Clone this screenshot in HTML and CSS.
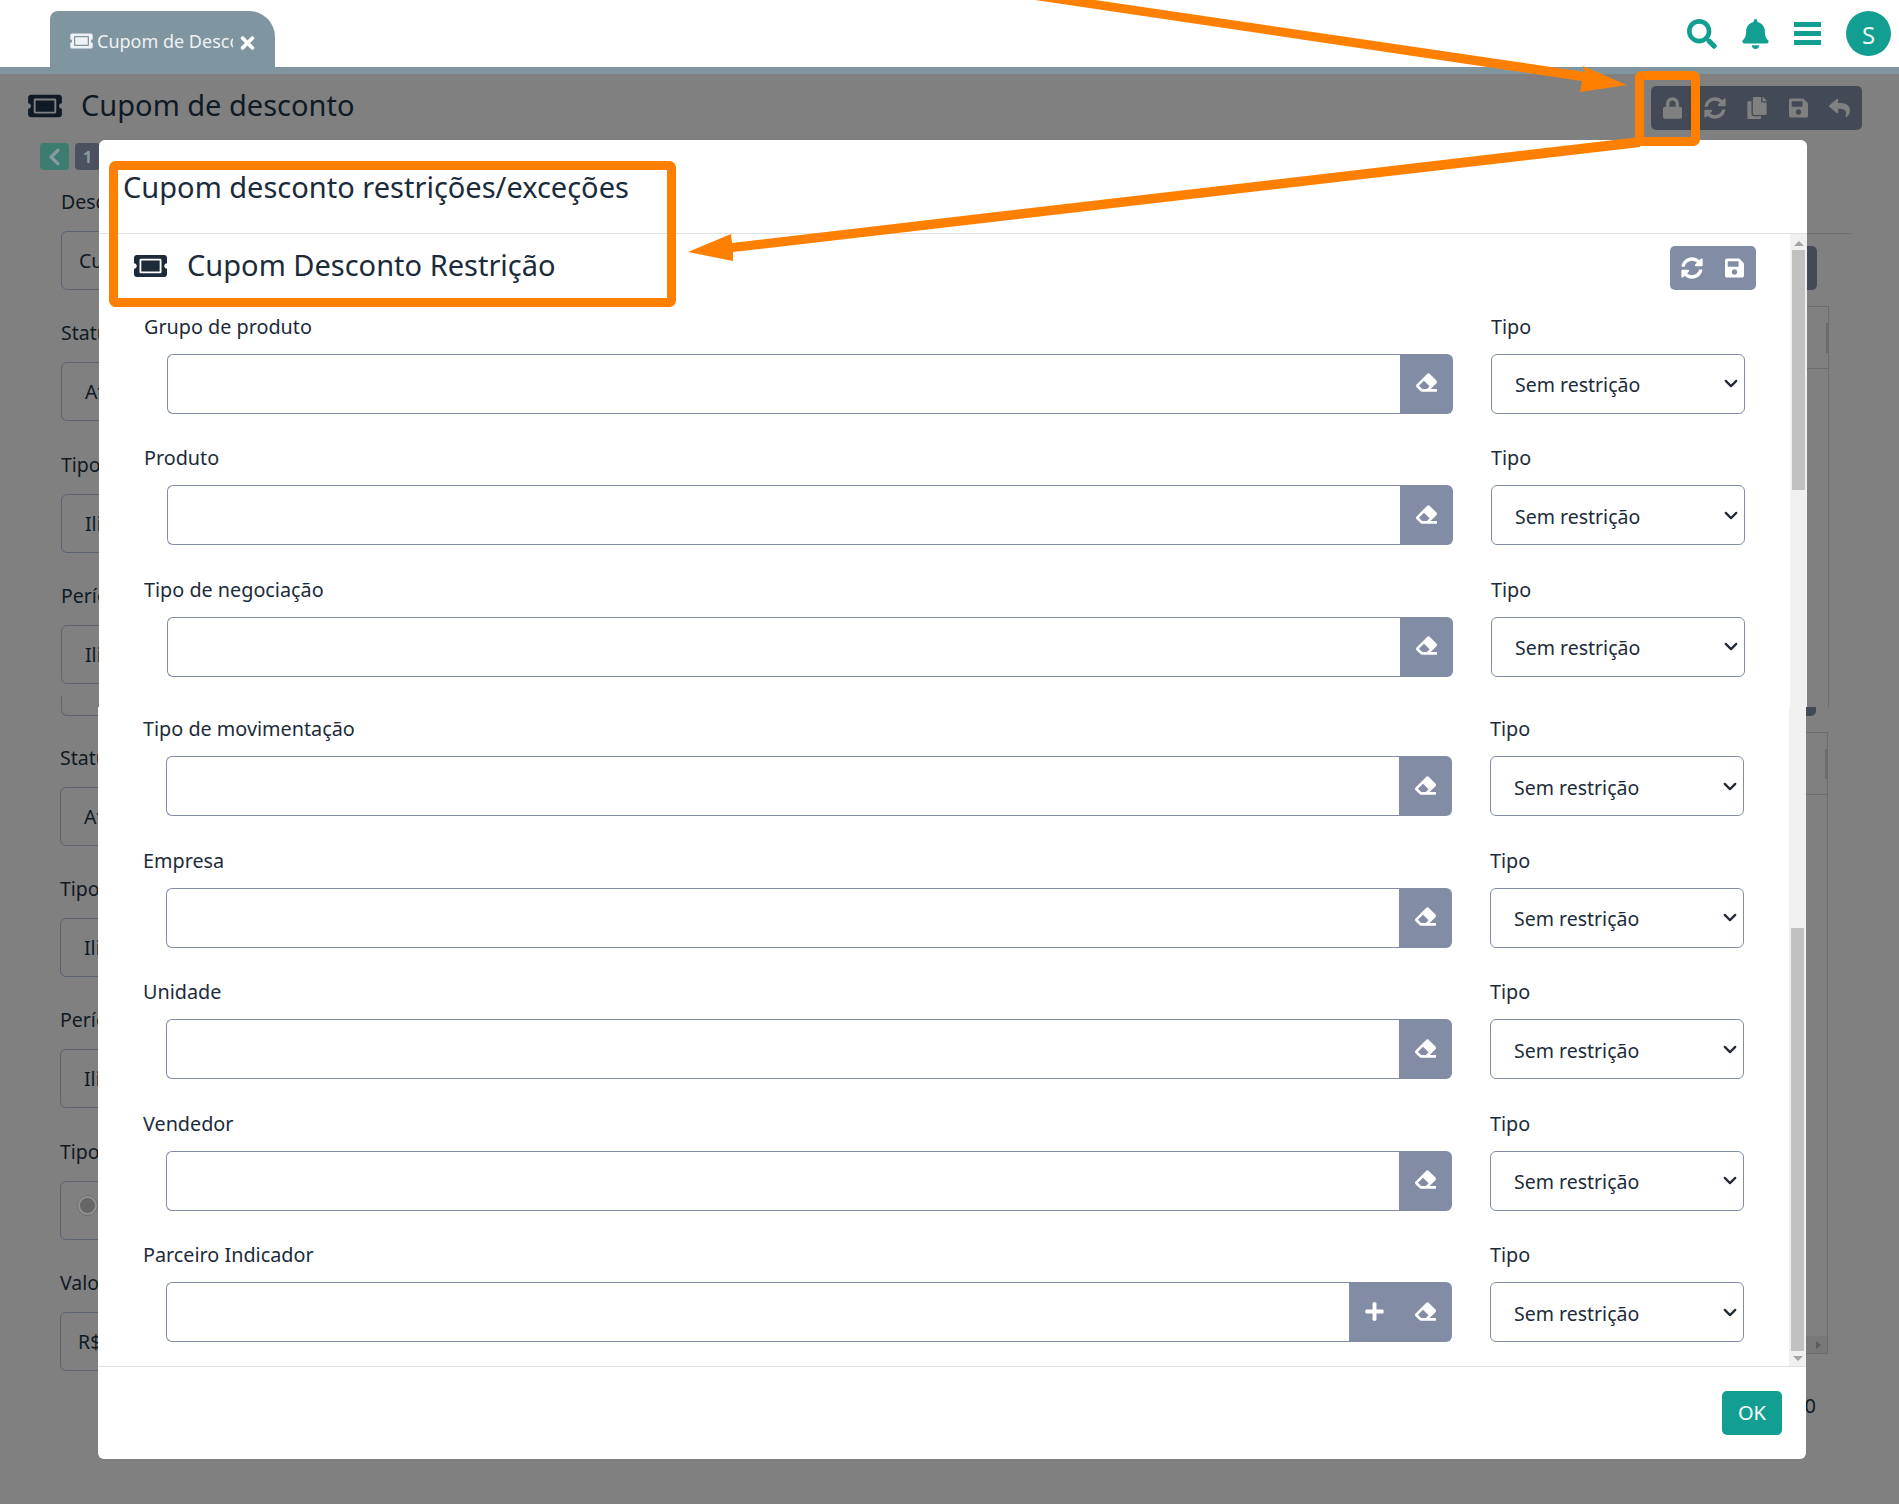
FILE: index.html
```html
<!DOCTYPE html>
<html lang="pt-BR">
<head>
  <meta charset="UTF-8">
  <title>Cupom de desconto</title>
  <link rel="stylesheet" href="styles.css">
</head>
<body>
  <svg class="sprite">
    <symbol id="i-ticket" viewBox="0 0 576 512"><path d="M128 160h320v192H128V160zm400 96c0 26.51 21.49 48 48 48v96c0 26.51-21.49 48-48 48H48c-26.51 0-48-21.49-48-48v-96c26.51 0 48-21.49 48-48s-21.49-48-48-48v-96c0-26.51 21.49-48 48-48h480c26.51 0 48 21.49 48 48v96c-26.51 0-48 21.49-48 48zm-48-104c0-13.255-10.745-24-24-24H120c-13.255 0-24 10.745-24 24v208c0 13.255 10.745 24 24 24h336c13.255 0 24-10.745 24-24V152z"/></symbol>
    <symbol id="i-search" viewBox="0 0 512 512"><path d="M505 442.7L405.3 343c-4.5-4.5-10.6-7-17-7H372c27.6-35.3 44-79.7 44-128C416 93.1 322.9 0 208 0S0 93.1 0 208s93.1 208 208 208c48.3 0 92.7-16.4 128-44v16.3c0 6.4 2.5 12.5 7 17l99.7 99.7c9.4 9.4 24.6 9.4 33.9 0l28.3-28.3c9.4-9.4 9.4-24.6.1-34zM208 336c-70.7 0-128-57.2-128-128 0-70.7 57.2-128 128-128 70.7 0 128 57.2 128 128 0 70.7-57.2 128-128 128z"/></symbol>
    <symbol id="i-bell" viewBox="0 0 448 512"><path d="M224 512c35.32 0 63.97-28.65 63.97-64H160.03c0 35.35 28.65 64 63.97 64zm215.39-149.71c-19.32-20.76-55.47-51.99-55.47-154.29 0-77.7-54.48-139.9-127.94-155.16V32c0-17.67-14.32-32-31.98-32s-31.98 14.33-31.98 32v20.84C118.56 68.1 64.08 130.3 64.08 208c0 102.3-36.15 133.53-55.47 154.29-6 6.45-8.66 14.16-8.61 21.71.11 16.4 12.98 32 32.1 32h383.8c19.12 0 32-15.6 32.1-32 .05-7.55-2.61-15.27-8.61-21.71z"/></symbol>
    <symbol id="i-lock" viewBox="0 0 448 512"><path d="M400 224h-24v-72C376 68.2 307.8 0 224 0S72 68.2 72 152v72H48c-26.5 0-48 21.5-48 48v192c0 26.5 21.5 48 48 48h352c26.5 0 48-21.5 48-48V272c0-26.5-21.5-48-48-48zm-104 0H152v-72c0-39.7 32.3-72 72-72s72 32.3 72 72v72z"/></symbol>
    <symbol id="i-sync" viewBox="0 0 512 512"><path d="M370.72 133.28C339.458 104.008 298.888 87.962 255.848 88c-77.458.068-144.328 53.178-162.791 126.85-1.344 5.363-6.122 9.15-11.651 9.15H24.103c-7.498 0-13.194-6.807-11.807-14.176C33.933 94.924 134.813 8 256 8c66.448 0 126.791 26.136 171.315 68.685L463.03 40.97C478.149 25.851 504 36.559 504 57.941V192c0 13.255-10.745 24-24 24H345.941c-21.382 0-32.09-25.851-16.971-40.971l41.75-41.749zM32 296h134.059c21.382 0 32.09 25.851 16.971 40.971l-41.75 41.75c31.262 29.273 71.835 45.319 114.876 45.28 77.418-.07 144.315-53.144 162.787-126.849 1.344-5.363 6.122-9.15 11.651-9.15h57.304c7.498 0 13.194 6.807 11.807 14.176C478.067 417.076 377.187 504 256 504c-66.448 0-126.791-26.136-171.315-68.685L48.97 471.03C33.851 486.149 8 475.441 8 454.059V320c0-13.255 10.745-24 24-24z"/></symbol>
    <symbol id="i-copy" viewBox="0 0 448 512"><path d="M320 448v40c0 13.255-10.745 24-24 24H24c-13.255 0-24-10.745-24-24V120c0-13.255 10.745-24 24-24h72v296c0 30.879 25.121 56 56 56h168zm0-344V0H152c-13.255 0-24 10.745-24 24v368c0 13.255 10.745 24 24 24h272c13.255 0 24-10.745 24-24V128H344c-13.2 0-24-10.8-24-24zm120.971-31.029L375.029 7.029A24 24 0 0 0 358.059 0H352v96h96v-6.059a24 24 0 0 0-7.029-16.97z"/></symbol>
    <symbol id="i-save" viewBox="0 0 448 512"><path d="M433.941 129.941l-83.882-83.882A48 48 0 0 0 316.118 32H48C21.49 32 0 53.49 0 80v352c0 26.51 21.49 48 48 48h352c26.51 0 48-21.49 48-48V163.882a48 48 0 0 0-14.059-33.941zM224 416c-35.346 0-64-28.654-64-64 0-35.346 28.654-64 64-64s64 28.654 64 64c0 35.346-28.654 64-64 64zm96-304.52V212c0 6.627-5.373 12-12 12H76c-6.627 0-12-5.373-12-12V108c0-6.627 5.373-12 12-12h228.52c3.183 0 6.235 1.264 8.485 3.515l3.48 3.48A11.996 11.996 0 0 1 320 111.48z"/></symbol>
    <symbol id="i-reply" viewBox="0 0 512 512"><path d="M8.309 189.836L184.313 37.851C199.719 24.546 224 35.347 224 56.015v80.053c160.629 1.839 288 34.032 288 186.258 0 61.441-39.581 122.309-83.333 154.132-13.653 9.931-33.111-2.533-28.077-18.631 45.344-145.012-21.507-183.51-176.59-185.742V360c0 20.7-24.3 31.453-39.687 18.164l-176.004-152c-11.071-9.562-11.086-26.753 0-36.328z"/></symbol>
    <symbol id="i-eraser" viewBox="0 0 512 512"><path d="M497.941 273.941c18.745-18.745 18.745-49.137 0-67.882l-160-160c-18.745-18.745-49.137-18.746-67.882 0l-256 256c-18.745 18.745-18.745 49.137 0 67.882l96 96A48.004 48.004 0 0 0 144 480h356c6.627 0 12-5.373 12-12v-40c0-6.627-5.373-12-12-12H355.883l142.058-142.059zm-302.627-62.627l137.373 137.373L265.373 416H150.628l-80-80 124.686-124.686z"/></symbol>
    <symbol id="i-plus" viewBox="0 0 448 512"><path d="M416 208H272V64c0-17.67-14.33-32-32-32h-32c-17.67 0-32 14.33-32 32v144H32c-17.67 0-32 14.33-32 32v32c0 17.67 14.33 32 32 32h144v144c0 17.67 14.33 32 32 32h32c17.67 0 32-14.33 32-32V304h144c17.67 0 32-14.33 32-32v-32c0-17.67-14.33-32-32-32z"/></symbol>
    <symbol id="i-times" viewBox="0 0 352 512"><path d="M242.72 256l100.07-100.07c12.28-12.28 12.28-32.19 0-44.48l-22.24-22.24c-12.28-12.28-32.19-12.28-44.48 0L176 189.28 75.93 89.21c-12.28-12.28-32.19-12.28-44.48 0L9.21 111.45c-12.28 12.28-12.28 32.19 0 44.48L109.28 256 9.21 356.07c-12.28 12.28-12.28 32.19 0 44.48l22.24 22.24c12.28 12.28 32.2 12.28 44.48 0L176 322.72l100.07 100.07c12.28 12.28 32.2 12.28 44.48 0l22.24-22.24c12.28-12.28 12.28-32.19 0-44.48L242.72 256z"/></symbol>
    <symbol id="i-left" viewBox="0 0 320 512"><path d="M34.52 239.03L228.87 44.69c9.37-9.37 24.57-9.37 33.94 0l22.67 22.67c9.36 9.36 9.37 24.52.04 33.9L131.49 256l154.02 154.75c9.34 9.38 9.32 24.54-.04 33.9l-22.67 22.67c-9.37 9.37-24.57 9.37-33.94 0L34.52 272.97c-9.37-9.37-9.37-24.57 0-33.94z"/></symbol>
  </svg>

  <header class="topbar">
    <div class="tab">
      <svg class="tab-icon"><use href="#i-ticket"/></svg>
      <span class="tab-text">Cupom de Desconto</span>
      <svg class="tab-close"><use href="#i-times"/></svg>
    </div>
    <nav class="topbar-icons">
      <svg class="top-search"><use href="#i-search"/></svg>
      <svg class="top-bell"><use href="#i-bell"/></svg>
      <div class="top-bars"><span></span><span></span><span></span></div>
      <div class="avatar">S</div>
    </nav>
  </header>
  <div class="band"></div>

  <main class="page">
    <div class="page-head">
      <svg class="page-icon"><use href="#i-ticket"/></svg>
      <h1 class="page-title">Cupom de desconto</h1>
      <div class="page-tools">
        <svg class="tool-lock"><use href="#i-lock"/></svg>
        <svg class="tool-sync"><use href="#i-sync"/></svg>
        <svg class="tool-copy"><use href="#i-copy"/></svg>
        <svg class="tool-save"><use href="#i-save"/></svg>
        <svg class="tool-reply"><use href="#i-reply"/></svg>
      </div>
    </div>
    <div class="page-columns">
      <div class="page-left">
        <div class="pager">
          <span class="pager-back"><svg><use href="#i-left"/></svg></span>
          <span class="pager-num">1</span>
        </div>
        <div class="bg-group">
          <div class="bg-field"><label>Descrição</label><div class="bg-box">Cupom</div></div>
          <div class="bg-field"><label>Status</label><div class="bg-box wide">Ativo</div></div>
          <div class="bg-field"><label>Tipo</label><div class="bg-box wide">Ilimitado</div></div>
          <div class="bg-field"><label>Período</label><div class="bg-box wide">Ilimitado</div></div>
          <div class="bg-stub"></div>
        </div>
        <div class="bg-group lower">
          <div class="bg-field"><label>Status</label><div class="bg-box wide">Ativo</div></div>
          <div class="bg-field"><label>Tipo</label><div class="bg-box wide">Ilimitado</div></div>
          <div class="bg-field"><label>Período</label><div class="bg-box wide">Ilimitado</div></div>
          <div class="bg-field"><label>Tipo</label><div class="bg-box radio-box"><span class="bg-radio"></span></div></div>
          <div class="bg-field"><label>Valor</label><div class="bg-box">R$ 0,00</div></div>
        </div>
      </div>
      <div class="page-right">
        <div class="bg-rule"></div>
        <div class="bg-button"></div>
        <div class="bg-table top-table"><div class="bg-table-row"><span class="bg-table-bar"></span></div></div>
        <div class="bg-button-end"></div>
        <div class="bg-table bottom-table">
          <div class="bg-table-row"><span class="bg-table-bar"></span></div>
          <div class="bg-table-scroll"><span></span></div>
        </div>
        <div class="bg-total">0</div>
      </div>
    </div>
  </main>

  <section class="modal">
    <div class="modal-upper">
      <div class="modal-header"><h2>Cupom desconto restrições/exceções</h2></div>
      <div class="modal-scroll upper-scroll">
        <div class="modal-content">
          <div class="section-head">
            <svg class="section-icon"><use href="#i-ticket"/></svg>
            <h3>Cupom Desconto Restrição</h3>
            <div class="section-tools">
              <svg class="tool-sync"><use href="#i-sync"/></svg>
              <svg class="tool-save"><use href="#i-save"/></svg>
            </div>
          </div>
          <div class="row">
            <div class="field"><label>Grupo de produto</label><div class="lookup"><input type="text"><button class="lookup-btn"><svg><use href="#i-eraser"/></svg></button></div></div>
            <div class="field"><label>Tipo</label><select><option>Sem restrição</option></select></div>
          </div>
          <div class="row">
            <div class="field"><label>Produto</label><div class="lookup"><input type="text"><button class="lookup-btn"><svg><use href="#i-eraser"/></svg></button></div></div>
            <div class="field"><label>Tipo</label><select><option>Sem restrição</option></select></div>
          </div>
          <div class="row">
            <div class="field"><label>Tipo de negociação</label><div class="lookup"><input type="text"><button class="lookup-btn"><svg><use href="#i-eraser"/></svg></button></div></div>
            <div class="field"><label>Tipo</label><select><option>Sem restrição</option></select></div>
          </div>
        </div>
        <div class="scrollbar">
          <span class="arrow-up"></span>
          <span class="thumb"></span>
        </div>
      </div>
    </div>

    <div class="modal-lower">
      <div class="modal-scroll lower-scroll">
        <div class="modal-content">
          <div class="row">
            <div class="field"><label>Tipo de movimentação</label><div class="lookup"><input type="text"><button class="lookup-btn"><svg><use href="#i-eraser"/></svg></button></div></div>
            <div class="field"><label>Tipo</label><select><option>Sem restrição</option></select></div>
          </div>
          <div class="row">
            <div class="field"><label>Empresa</label><div class="lookup"><input type="text"><button class="lookup-btn"><svg><use href="#i-eraser"/></svg></button></div></div>
            <div class="field"><label>Tipo</label><select><option>Sem restrição</option></select></div>
          </div>
          <div class="row">
            <div class="field"><label>Unidade</label><div class="lookup"><input type="text"><button class="lookup-btn"><svg><use href="#i-eraser"/></svg></button></div></div>
            <div class="field"><label>Tipo</label><select><option>Sem restrição</option></select></div>
          </div>
          <div class="row">
            <div class="field"><label>Vendedor</label><div class="lookup"><input type="text"><button class="lookup-btn"><svg><use href="#i-eraser"/></svg></button></div></div>
            <div class="field"><label>Tipo</label><select><option>Sem restrição</option></select></div>
          </div>
          <div class="row">
            <div class="field"><label>Parceiro Indicador</label><div class="lookup"><input type="text"><button class="lookup-btn plus"><svg><use href="#i-plus"/></svg></button><button class="lookup-btn"><svg><use href="#i-eraser"/></svg></button></div></div>
            <div class="field"><label>Tipo</label><select><option>Sem restrição</option></select></div>
          </div>
        </div>
        <div class="scrollbar">
          <span class="thumb"></span>
          <span class="arrow-down"></span>
        </div>
      </div>
      <div class="modal-footer"><button class="btn-ok">OK</button></div>
    </div>
  </section>

  <svg class="marks" viewBox="0 0 1899 1504">
    <rect x="113.5" y="165.5" width="558" height="137" rx="2"/>
    <rect x="1639.5" y="75.5" width="56" height="66" rx="2"/>
    <polygon class="fill" points="1035,0 1095,0 1585,72 1583,66 1627,85 1580,92 1582,81"/>
    <polygon class="fill" points="1640,137 1640,147 733,252 733,261 688,252 731,234 732,243"/>
  </svg>
</body>
</html>
```

FILE: styles.css
```css
* {
  box-sizing: border-box;
}
html, body {
  margin: 0;
  height: 1504px;
  overflow: hidden;
}
body {
  position: relative;
  font-family: "Noto Sans", Arial, sans-serif;
  font-size: 20px;
  color: #1c2b3a;
  background: #808080;
}
svg {
  fill: currentColor;
  display: block;
}
.sprite {
  display: none;
}
h1, h2, h3 {
  margin: 0;
  font-weight: 400;
}
label {
  display: block;
  line-height: 27px;
}

/* top bar */
.topbar {
  display: flex;
  justify-content: space-between;
  height: 67px;
  padding: 11px 8px 0 50px;
  background: white;
}
.tab {
  display: flex;
  align-items: center;
  width: 225px;
  height: 56px;
  padding: 4px 20px 0 20px;
  background: #7f95a0;
  border-radius: 8px 26px 0 0;
  color: #eef2f4;
}
.tab-icon {
  flex: none;
  width: 23px;
  height: 20px;
}
.tab-text {
  width: 137px;
  margin-left: 4px;
  overflow: hidden;
  white-space: nowrap;
  font-size: 18px;
}
.tab-close {
  flex: none;
  width: 15px;
  height: 20px;
  margin: 4px 0 0 7px;
  color: white;
}
.topbar-icons {
  display: flex;
  align-items: flex-start;
  color: #129f92;
}
.top-search {
  width: 30px;
  height: 30px;
  margin-top: 8px;
}
.top-bell {
  width: 27px;
  height: 30px;
  margin: 8px 0 0 25px;
}
.top-bars {
  display: flex;
  flex-direction: column;
  gap: 4px;
  width: 27px;
  margin: 11px 0 0 25px;
}
.top-bars span {
  height: 5px;
  background: #129f92;
}
.avatar {
  width: 45px;
  height: 45px;
  margin-left: 25px;
  border-radius: 50%;
  background: #129f92;
  color: #e9f6f4;
  font-size: 24px;
  line-height: 47px;
  text-align: center;
}
.band {
  height: 7px;
  background: #7f95a0;
}

/* page behind the modal */
.page {
  color: #101a24;
}
.page-head {
  display: flex;
  align-items: flex-start;
  height: 66px;
  padding: 12px 37px 0 28px;
}
.page-icon {
  width: 34px;
  height: 30px;
  margin-top: 5px;
}
.page-title {
  margin-left: 19px;
  font-size: 29px;
  line-height: 40px;
  margin-top: -1px;
}
.page-tools {
  display: flex;
  align-items: center;
  gap: 21.5px;
  height: 44px;
  margin-left: auto;
  padding: 0 12px;
  background: #434955;
  border-radius: 5px;
  color: #808080;
}
.page-tools svg, .section-tools svg {
  height: 22px;
}
.tool-lock, .tool-save {
  width: 19px;
}
.tool-sync {
  width: 22px;
}
.tool-copy {
  width: 20px;
}
.tool-reply {
  width: 21px;
}
.page-columns {
  display: flex;
  justify-content: space-between;
}
.page-left {
  padding: 3px 0 0 40px;
}
.pager {
  display: flex;
  gap: 6px;
  height: 27px;
  margin-bottom: 18px;
}
.pager span {
  display: flex;
  align-items: center;
  justify-content: center;
  width: 29px;
  border-radius: 4px;
  font-size: 16px;
  font-weight: 700;
  color: #8a9aa0;
}
.pager-back {
  background: #3c7d70;
}
.pager-back svg {
  width: 13px;
  height: 20px;
}
.pager span.pager-num {
  width: 25px;
  background: #4b515e;
}
.bg-group {
  width: 600px;
  margin-left: 21px;
  font-size: 19.5px;
}
.bg-group.lower {
  margin-left: 20px;
  margin-top: 28px;
}
.bg-field {
  margin-bottom: 29.4px;
}
.bg-field label {
  margin-bottom: 16px;
}
.bg-field:last-of-type {
  margin-bottom: 0;
}
.bg-box {
  display: flex;
  align-items: center;
  height: 59px;
  padding-left: 17px;
  border: 1px solid #5c6270;
  border-radius: 6px;
}
.bg-box.wide {
  padding-left: 23px;
}
.radio-box {
  align-items: flex-start;
  padding: 13px 0 0 16px;
}
.bg-radio {
  width: 21px;
  height: 21px;
  border: 3px solid #8f8f8f;
  outline: 1px solid #6c6c6c;
  outline-offset: -1px;
  border-radius: 50%;
  background: #666;
}
.bg-stub {
  height: 20px;
  margin-top: -18px;
  border: 1px solid #5c6270;
  border-top: 0;
  border-radius: 0 0 6px 6px;
}
.page-right {
  display: flex;
  flex-direction: column;
  align-items: flex-end;
  width: 400px;
  margin-right: 48px;
  padding-top: 93px;
}
.bg-rule {
  width: 100%;
  height: 1px;
  background: #6f6f6f;
}
.bg-button {
  width: 200px;
  height: 44px;
  margin: 12px 34px 16px 0;
  background: #434955;
  border-radius: 5px;
}
.bg-table {
  width: 100%;
  margin-right: 22px;
  border: 1px solid #6c6c6c;
}
.top-table {
  height: 401px;
  border-bottom: 0;
}
.bottom-table {
  display: flex;
  flex-direction: column;
  justify-content: space-between;
  height: 622px;
  margin-top: 16px;
  margin-right: 23px;
}
.bg-table-row {
  position: relative;
  height: 62px;
  border-bottom: 1px solid #6c6c6c;
}
.bg-table-bar {
  position: absolute;
  right: 0;
  top: 16px;
  width: 2px;
  height: 30px;
  background: #6c6c6c;
}
.bg-button-end {
  width: 200px;
  height: 9px;
  margin-right: 35px;
  background: #434955;
  border-radius: 0 0 5px 0;
}
.bg-table-scroll {
  display: flex;
  align-items: center;
  justify-content: flex-end;
  height: 17px;
  padding-right: 6px;
  background: #787878;
}
.bg-table-scroll span {
  border-left: 5px solid #5c5c5c;
  border-top: 4px solid transparent;
  border-bottom: 4px solid transparent;
}
.bg-total {
  margin: 38px 35px 0 0;
  line-height: 27px;
}

/* modal */
.modal {
  position: absolute;
  left: 99px;
  top: 140px;
  width: 1708px;
}
.modal-upper {
  height: 567px;
  background: white;
  border-radius: 6px 6px 0 0;
}
.modal-lower {
  height: 752px;
  margin-left: -1px;
  margin-right: 1px;
  background: white;
  border-radius: 0 0 6px 6px;
}
.modal-header {
  height: 94px;
  padding: 27px 24px 0 24px;
  border-bottom: 1px solid #dee2e6;
}
.modal-header h2 {
  font-size: 29px;
  line-height: 40px;
}
.modal-scroll {
  display: flex;
}
.upper-scroll {
  height: 473px;
}
.lower-scroll {
  height: 659px;
}
.modal-content {
  flex: 1;
  min-width: 0;
}
.lower-scroll .modal-content {
  padding-top: 8px;
}
.section-head {
  display: flex;
  align-items: center;
  height: 44px;
  margin: 12px 34px 22.75px 35px;
}
.section-icon {
  width: 33px;
  height: 30px;
  margin-top: -4px;
}
.section-head h3 {
  margin: -7px 0 0 20px;
  font-size: 29px;
  line-height: 40px;
}
.section-tools {
  display: flex;
  align-items: center;
  gap: 22px;
  height: 44px;
  margin-left: auto;
  padding: 0 12px 0 11px;
  background: #828da5;
  border-radius: 5px;
  color: white;
}
.row {
  display: grid;
  grid-template-columns: 1309px 254px;
  column-gap: 38px;
  height: 131.5px;
  padding-left: 45px;
}
.field label {
  margin-bottom: 14px;
  font-size: 19.8px;
}
.lookup {
  display: flex;
  height: 60px;
  margin-left: 23px;
}
.lookup input {
  flex: 1;
  min-width: 0;
  border: 1px solid #828da5;
  border-right: 0;
  border-radius: 6px 0 0 6px;
  background: white;
}
.lookup-btn {
  display: flex;
  align-items: center;
  justify-content: center;
  width: 53px;
  padding: 0;
  border: 0;
  background: #828da5;
  color: white;
}
.lookup-btn:last-child {
  border-radius: 0 6px 6px 0;
}
.lookup-btn.plus {
  width: 50px;
}
.lookup-btn svg {
  width: 21px;
  height: 21px;
  margin-top: -2px;
}
select {
  appearance: none;
  width: 100%;
  height: 60px;
  padding: 2px 0 0 23px;
  border: 1px solid #828da5;
  border-radius: 6px;
  background: white url("data:image/svg+xml,%3Csvg xmlns='http://www.w3.org/2000/svg' viewBox='0 0 16 10'%3E%3Cpath fill='none' stroke='%23222b36' stroke-linecap='round' stroke-linejoin='round' stroke-width='2.6' d='M2 2l6 6 6-6'/%3E%3C/svg%3E") no-repeat right 6px center / 14px 9px;
  font: inherit;
  font-size: 19.5px;
  color: inherit;
}
.scrollbar {
  display: flex;
  flex-direction: column;
  flex: none;
  width: 17px;
  background: #f0f0f0;
}
.upper-scroll .scrollbar {
  align-items: center;
}
.lower-scroll .scrollbar {
  align-items: center;
  justify-content: flex-end;
}
.arrow-up {
  height: 6px;
  margin: 6px 0 4px;
  border-left: 5px solid transparent;
  border-right: 5px solid transparent;
  border-bottom: 5px solid #a3a3a3;
}
.arrow-down {
  height: 6px;
  margin: 5px 0 4px;
  border-left: 5px solid transparent;
  border-right: 5px solid transparent;
  border-top: 5px solid #a3a3a3;
}
.thumb {
  width: 13px;
  background: #c1c1c1;
}
.upper-scroll .thumb {
  height: 240px;
}
.lower-scroll .thumb {
  height: 423px;
}
.modal-footer {
  display: flex;
  justify-content: flex-end;
  height: 93px;
  padding: 24px 24px 0 0;
  border-top: 1px solid #dee2e6;
}
.btn-ok {
  width: 60px;
  height: 44px;
  padding: 0 0 2px;
  border: 0;
  border-radius: 5px;
  background: #129f92;
  color: white;
  font: inherit;
}

/* orange annotations drawn on the screenshot */
.marks {
  position: absolute;
  left: 0;
  top: 0;
  width: 1899px;
  height: 1504px;
  fill: none;
}
.marks rect {
  stroke: #ff8000;
  stroke-width: 9;
}
.marks .fill {
  fill: #ff8000;
}
```
